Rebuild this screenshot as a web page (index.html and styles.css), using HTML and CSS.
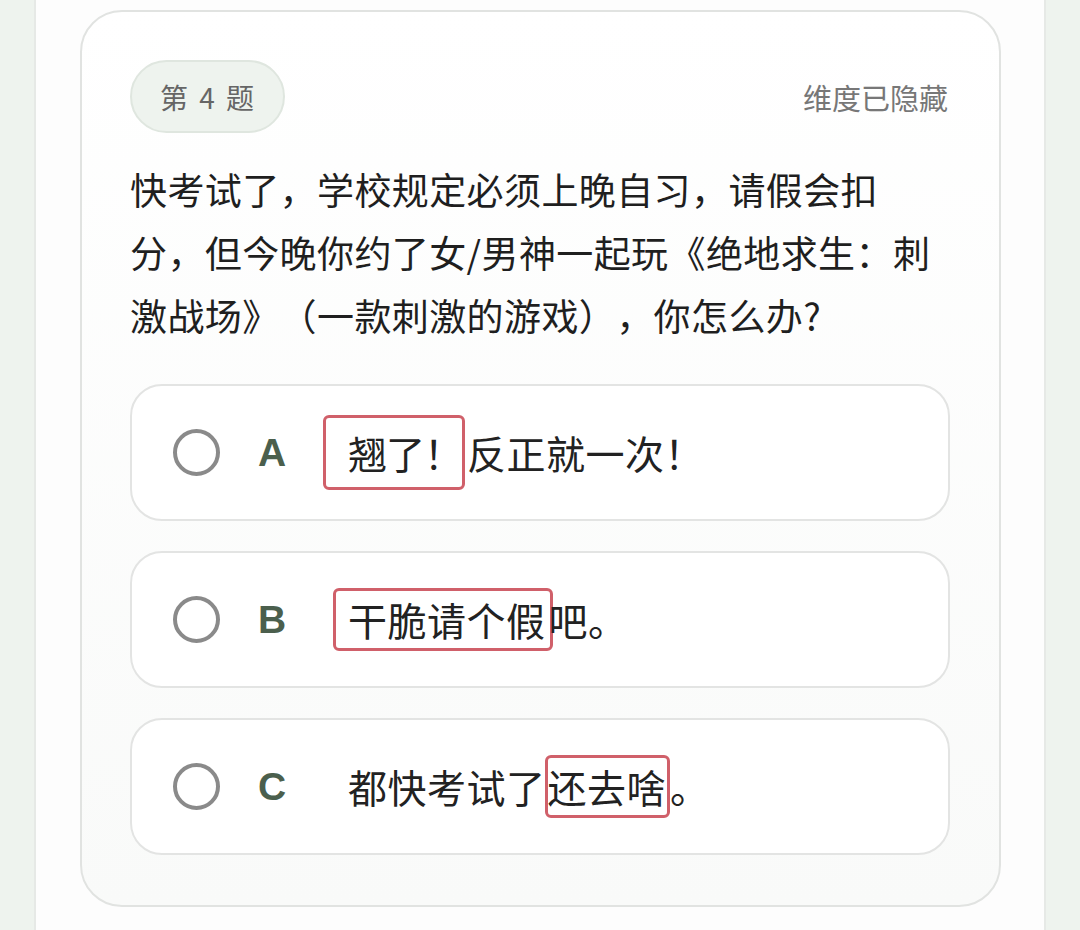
FILE: index.html
```html
<!DOCTYPE html>
<html lang="zh-CN">
<head>
    <meta charset="UTF-8">
    <meta name="viewport" content="width=device-width, initial-scale=1.0">
    <title>第 4 题</title>
    <link rel="stylesheet" href="styles.css">
</head>
<body>
    <div class="page">
        <div class="card">
            <div class="card-head">
                <div class="badge">第 4 题</div>
                <div class="dimension">维度已隐藏</div>
            </div>
            <p class="question">快考试了，学校规定必须上晚自习，请假会扣<br>分，但今晚你约了女/男神一起玩《绝地求生：刺<br>激战场》（一款刺激的游戏），你怎么办?</p>
            <div class="options">
                <div class="option">
                    <span class="radio"></span>
                    <span class="letter">A</span>
                    <span class="text"><span class="mark mark-a">翘了！</span>反正就一次！</span>
                </div>
                <div class="option">
                    <span class="radio"></span>
                    <span class="letter">B</span>
                    <span class="text"><span class="mark mark-b">干脆请个假</span>吧。</span>
                </div>
                <div class="option">
                    <span class="radio"></span>
                    <span class="letter">C</span>
                    <span class="text">都快考试了<span class="mark mark-c">还去啥</span>。</span>
                </div>
            </div>
        </div>
    </div>
</body>
</html>
```

FILE: styles.css
```css
* {
    margin: 0;
    padding: 0;
    box-sizing: border-box;
    font-family: 'Noto Sans CJK SC', 'Noto Sans', sans-serif;
    text-spacing-trim: space-all;
}

body {
    background: #eef3ee;
    display: flex;
    justify-content: center;
    min-height: 930px;
    overflow: hidden;
}

.page {
    width: 1012px;
    min-height: 930px;
    background: #fdfdfd;
    border-left: 2px solid #e6e9e6;
    border-right: 2px solid #e6e9e6;
    padding: 10px 43px 0 44px;
}

.card {
    width: 921px;
    border: 2px solid #e1e3e1;
    border-radius: 42px;
    background: linear-gradient(180deg, #ffffff, #f9faf9);
    padding: 48px 49px 50px 48px;
}

.card-head {
    display: flex;
    justify-content: space-between;
    align-items: center;
}

.badge {
    height: 73px;
    padding: 0 27px 0 28px;
    border: 2px solid #dfe6df;
    border-radius: 37px;
    background: #eef3ee;
    color: #666;
    font-size: 28px;
    letter-spacing: 2px;
    word-spacing: 1px;
    display: flex;
    align-items: center;
}

.dimension {
    color: #777;
    font-size: 29px;
    margin-right: 2px;
}

.question {
    margin-top: 25px;
    font-size: 37px;
    letter-spacing: 0.4px;
    line-height: 63px;
    color: #1f1f1f;
}

.options {
    margin-top: 37px;
    display: flex;
    flex-direction: column;
    gap: 30px;
}

.option {
    height: 137px;
    border: 2px solid #e3e4e3;
    border-radius: 32px;
    background: #fff;
    display: flex;
    align-items: center;
    padding-left: 41px;
}

.radio {
    width: 47px;
    height: 47px;
    border: 4px solid #8a8a8a;
    border-radius: 50%;
    flex-shrink: 0;
}

.letter {
    width: 90px;
    margin-left: 38px;
    font-family: 'Liberation Sans', Arial, sans-serif;
    font-weight: bold;
    font-size: 39px;
    color: #4b5f4d;
}

.text {
    font-size: 39px;
    color: #222;
    letter-spacing: 0.5px;
}

.mark {
    display: inline-block;
    border: 3px solid #d0606a;
    border-radius: 6px;
    line-height: 57px;
}

.mark-a {
    line-height: 69px;
    letter-spacing: -1px;
    padding: 0 0 0 22px;
    margin-left: -25px;
    margin-right: 2px;
}

.mark-b {
    padding: 0 4px 0 12px;
    margin-left: -15px;
    margin-right: -4px;
}

.mark-c {
    padding: 0 1px 0 0;
    margin-left: -1px;
}
```
